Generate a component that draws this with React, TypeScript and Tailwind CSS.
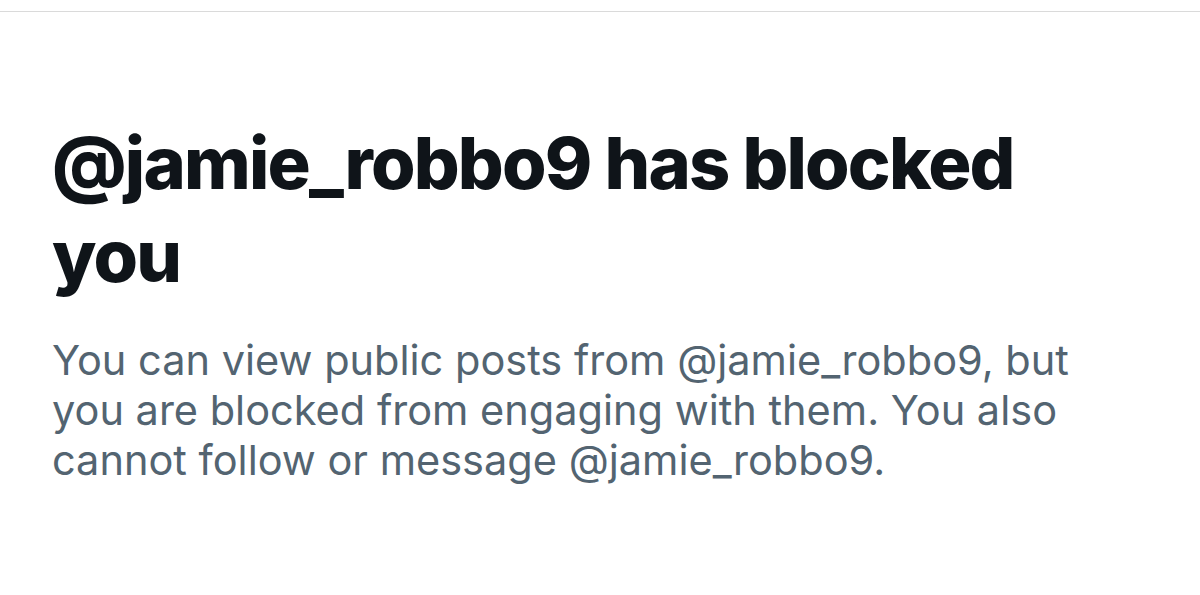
export default function App() {
  return (
    <div className="min-h-[595px] w-full bg-white" style={{ fontFamily: "Inter, 'Noto Sans', sans-serif" }}>
      <div className="h-[11px]" />
      <div className="border-t border-[#dadada]" />
      <div className="pl-[52px] pr-[40px] pt-[104px]">
        <h1 className="w-[1000px] text-[72px] font-extrabold leading-[93px] tracking-[-0.025em] text-[#0f1419]">
          @jamie_robbo9 has blocked you
        </h1>
        <p className="mt-[33px] w-[1070px] text-[41.5px] leading-[50px] text-[#536471]">
          You can view public posts from @jamie_robbo9, but you are blocked from engaging with them. You also cannot follow or message @jamie_robbo9.
        </p>
      </div>
    </div>
  );
}
